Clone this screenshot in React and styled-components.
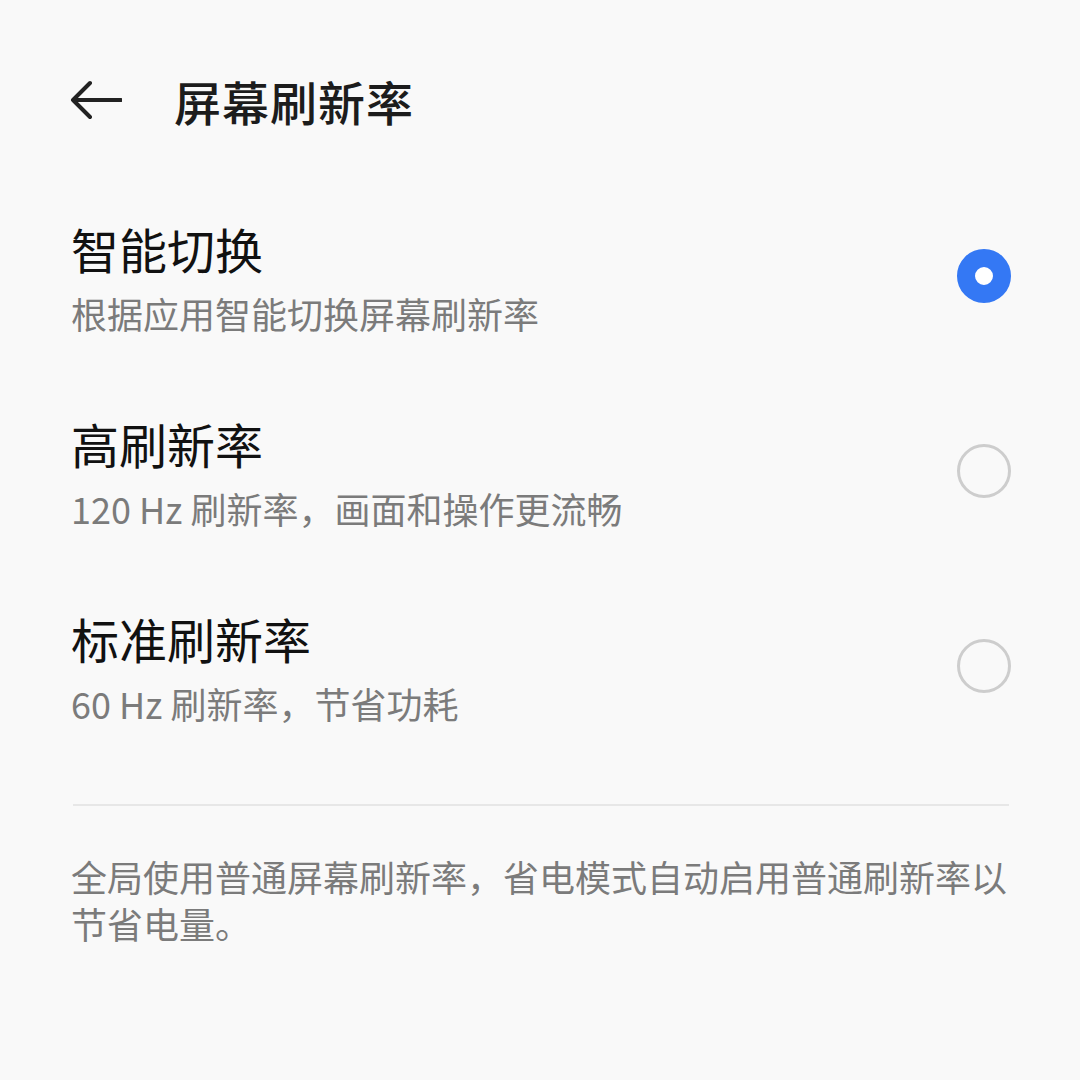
import styled, { createGlobalStyle } from "styled-components";
import { useState } from "react";

const GlobalStyle = createGlobalStyle`
    html, body {
        margin: 0;
        padding: 0;
        background: #f9f9f9;
    }
    body {
        font-family: "Noto Sans CJK SC", "Noto Sans", sans-serif;
        -webkit-font-smoothing: antialiased;
    }
`;

const Page = styled.div`
    width: 1080px;
    height: 1080px;
    background: #f9f9f9;
    box-sizing: border-box;
    padding: 40px 69px 0 71px;
    overflow: hidden;
`;

const Header = styled.header`
    display: flex;
    align-items: center;
    height: 120px;
    gap: 52px;
    margin-left: -3px;
    .back {
        display: flex;
        color: #222222;
    }
    .title {
        margin: 0;
        font-size: 47px;
        font-weight: 500;
        color: #1c1c1c;
        letter-spacing: 1px;
    }
`;

const List = styled.div`
    display: flex;
    flex-direction: column;
    gap: 76px;
    margin-top: 58px;
`;

const Option = styled.div`
    display: flex;
    align-items: center;
    justify-content: space-between;
    cursor: pointer;
    .text {
        display: flex;
        flex-direction: column;
        gap: 11px;
    }
    .label {
        font-size: 48px;
        line-height: 60px;
        color: #111111;
    }
    .desc {
        font-size: 36px;
        line-height: 48px;
        color: #7b7b7b;
    }
`;

const Radio = styled.span`
    flex-shrink: 0;
    width: 54px;
    height: 54px;
    border-radius: 50%;
    box-sizing: border-box;
    margin-top: -4px;
    border: ${({ $checked }) => ($checked ? "18px solid #3478f4" : "3px solid #cdcdcd")};
    background: ${({ $checked }) => ($checked ? "#ffffff" : "transparent")};
`;

const Divider = styled.hr`
    border: none;
    height: 2px;
    background: #e7e7e7;
    margin: 77px 2px 0 2px;
`;

const Note = styled.p`
    margin: 47px 0 0;
    font-size: 36px;
    line-height: 47px;
    color: #7b7b7b;
`;

const options = [
    { label: "智能切换", desc: "根据应用智能切换屏幕刷新率" },
    { label: "高刷新率", desc: "120 Hz 刷新率，画面和操作更流畅" },
    { label: "标准刷新率", desc: "60 Hz 刷新率，节省功耗" },
];

const App = () => {
    const [selected, setSelected] = useState(0);

    return (
        <Page>
            <GlobalStyle />
            <Header>
                <span className="back">
                    <svg width="54" height="40" viewBox="0 0 54 40" fill="none">
                        <path
                            d="M53 20H5M22 3L5 20L22 37"
                            stroke="currentColor"
                            strokeWidth="4"
                            strokeLinecap="round"
                            strokeLinejoin="round"
                        />
                    </svg>
                </span>
                <h1 className="title">屏幕刷新率</h1>
            </Header>
            <List>
                {options.map(({ label, desc }, i) => (
                    <Option key={label} onClick={() => setSelected(i)}>
                        <div className="text">
                            <span className="label">{label}</span>
                            <span className="desc">{desc}</span>
                        </div>
                        <Radio $checked={selected === i} />
                    </Option>
                ))}
            </List>
            <Divider />
            <Note>全局使用普通屏幕刷新率，省电模式自动启用普通刷新率以节省电量。</Note>
        </Page>
    );
};

export default App;
